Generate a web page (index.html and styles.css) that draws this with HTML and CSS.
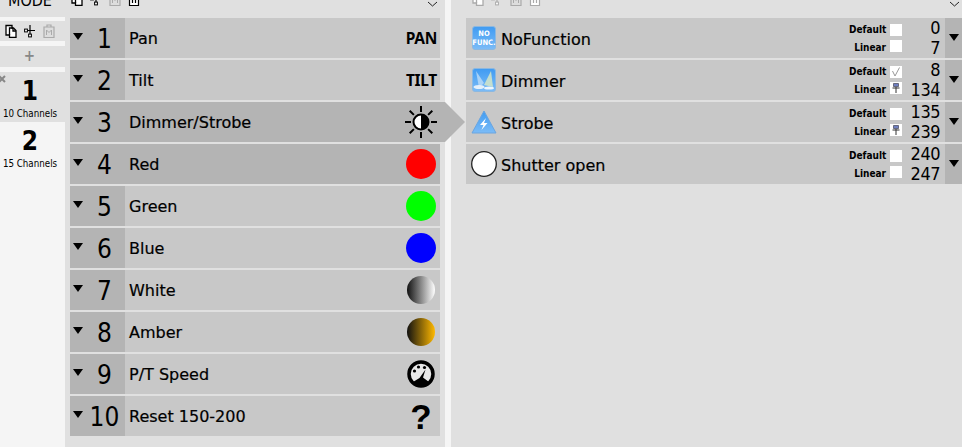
FILE: index.html
```html
<!DOCTYPE html>
<html>

<head>
  <meta charset="utf-8" />
  <title>Fixture channels</title>
  <link rel="stylesheet" href="styles.css">
</head>

<body>

<svg class="defs" width="0" height="0">
  <symbol id="i-copy" viewBox="0 0 12 14">
    <path d="M1 1.500h6v2.500h1.500L11 6.500v7H4.500v-2.500H1z" fill="#fff" stroke="currentColor" stroke-width="1.300"/>
    <path d="M4.500 11V4h3.500M8 4v3h3" fill="none" stroke="currentColor" stroke-width="1.300"/>
  </symbol>
  <symbol id="i-tree" viewBox="0 0 12 14">
    <path d="M6 1v12M1 6.500h10" stroke="currentColor" stroke-width="1.200" fill="none"/>
    <rect x="0.600" y="5.100" width="2.800" height="2.800" fill="#fff" stroke="currentColor"/>
    <rect x="4.600" y="10.100" width="2.800" height="2.800" fill="#fff" stroke="currentColor"/>
  </symbol>
  <symbol id="i-paste" viewBox="0 0 12 14">
    <path d="M1 3h10v10.500H1z" fill="#ddd" stroke="currentColor" stroke-width="1.200"/>
    <path d="M4 3V1h4v2" fill="none" stroke="currentColor" stroke-width="1.200"/>
    <path d="M3.500 11V6l2.500 2.500L8.500 6v5" fill="none" stroke="currentColor"/>
  </symbol>
  <symbol id="i-bin" viewBox="0 0 12 14">
    <path d="M1.500 2.500h9v11h-9z" fill="#fff" stroke="currentColor" stroke-width="1.200"/>
    <path d="M4.500 5v6M7.500 5v6M0 2.500h12M4 2.500V0.500h4v2" fill="none" stroke="currentColor" stroke-width="1.200"/>
  </symbol>
  <symbol id="i-pin" viewBox="0 0 12 12">
    <path d="M3.500 1.500h5v3h-5z" fill="#6f7fc0" stroke="#445" stroke-width="0.700"/>
    <path d="M2.500 6h7M6 5v6" stroke="#333" stroke-width="1" fill="none"/>
  </symbol>
  <linearGradient id="blue" x1="0" y1="0" x2="0" y2="1">
    <stop offset="0" stop-color="#3f9bf2"/>
    <stop offset="1" stop-color="#7cbcf7"/>
  </linearGradient>
</svg>

<div class="sidebar">
  <div class="side-head">MODE</div>
  <div class="side-tools">
    <svg class="tool"><use href="#i-copy"/></svg>
    <svg class="tool"><use href="#i-tree"/></svg>
    <svg class="tool off"><use href="#i-paste"/></svg>
  </div>
  <div class="side-add">+</div>
  <div class="mode current">
    <svg class="mode-close" width="6" height="8" viewBox="0 0 6 8"><path d="M-1 1l6 6M5 1l-6 6" stroke="#888" stroke-width="2"/></svg>
    <div class="mode-num">1</div>
    <div class="mode-label">10 Channels</div>
  </div>
  <div class="mode">
    <div class="mode-num">2</div>
    <div class="mode-label">15 Channels</div>
  </div>
</div>

<div class="channels">
  <div class="toolbar">
    <svg class="tool"><use href="#i-copy"/></svg>
    <svg class="tool"><use href="#i-tree"/></svg>
    <svg class="tool off"><use href="#i-paste"/></svg>
    <svg class="tool"><use href="#i-bin"/></svg>
    <svg class="chevron" width="11" height="6" viewBox="0 0 11 6"><path d="M1 1l4.500 4L10 1" fill="none" stroke="#222"/></svg>
  </div>

  <div class="row">
    <span class="tri"></span><span class="num">1</span><span class="name">Pan</span>
    <span class="tag">PAN</span>
  </div>
  <div class="row">
    <span class="tri"></span><span class="num">2</span><span class="name">Tilt</span>
    <span class="tag">TILT</span>
  </div>
  <div class="row selected">
    <span class="tri"></span><span class="num">3</span><span class="name">Dimmer/Strobe</span>
    <span class="glyph">
      <svg width="34" height="34" viewBox="0 0 34 34">
        <circle cx="17" cy="17" r="7.500" fill="#fff" stroke="#000" stroke-width="2"/>
        <path d="M17 9.500a7.500 7.500 0 0 1 0 15z" fill="#000"/>
        <path d="M17 1v6M17 27v6M1 17h6M27 17h6M5.700 5.700l4.200 4.200M24.100 24.100l4.200 4.200M5.700 28.300l4.200-4.200M24.100 9.900l4.200-4.200" stroke="#000" stroke-width="2" fill="none"/>
      </svg>
    </span>
  </div>
  <div class="row marked">
    <span class="tri"></span><span class="num">4</span><span class="name">Red</span>
    <span class="glyph"><span class="dot red"></span></span>
  </div>
  <div class="row">
    <span class="tri"></span><span class="num">5</span><span class="name">Green</span>
    <span class="glyph"><span class="dot green"></span></span>
  </div>
  <div class="row">
    <span class="tri"></span><span class="num">6</span><span class="name">Blue</span>
    <span class="glyph"><span class="dot blue"></span></span>
  </div>
  <div class="row">
    <span class="tri"></span><span class="num">7</span><span class="name">White</span>
    <span class="glyph"><span class="dot white"></span></span>
  </div>
  <div class="row">
    <span class="tri"></span><span class="num">8</span><span class="name">Amber</span>
    <span class="glyph"><span class="dot amber"></span></span>
  </div>
  <div class="row">
    <span class="tri"></span><span class="num">9</span><span class="name">P/T Speed</span>
    <span class="glyph">
      <svg width="30" height="30" viewBox="0 0 30 30">
        <circle cx="15" cy="15" r="12" fill="#e8e8e8" stroke="#000" stroke-width="3.500"/>
        <circle cx="8.500" cy="12" r="1.600"/>
        <circle cx="12.500" cy="8" r="1.600"/>
        <circle cx="18.500" cy="8.500" r="1.600"/>
        <path d="M19.500 10.500L17 18.500L23 23A11 11 0 0 1 7 23L13.500 19z"/>
      </svg>
    </span>
  </div>
  <div class="row">
    <span class="tri"></span><span class="num">10</span><span class="name">Reset 150-200</span>
    <span class="glyph"><span class="ask">?</span></span>
  </div>
</div>

<div class="functions">
  <div class="toolbar light">
    <svg class="tool"><use href="#i-copy"/></svg>
    <svg class="tool"><use href="#i-tree"/></svg>
    <svg class="tool"><use href="#i-paste"/></svg>
    <svg class="tool"><use href="#i-bin"/></svg>
    <svg class="chevron" width="11" height="6" viewBox="0 0 11 6"><path d="M1 1l4.500 4L10 1" fill="none" stroke="#222"/></svg>
  </div>

  <div class="frow">
    <svg class="ficon" width="24" height="24" viewBox="0 0 24 24">
      <rect x="0.500" y="0.500" width="23" height="23" rx="2.500" fill="url(#blue)" stroke="#8cb8e0"/>
      <text x="12" y="10" class="ficon-text">NO</text>
      <text x="12" y="19" class="ficon-text">FUNC.</text>
    </svg>
    <span class="fname">NoFunction</span>
    <div class="limits">
      <span class="lbl">Default</span><span class="box"></span><span class="val">0</span>
      <span class="lbl">Linear</span><span class="box"></span><span class="val">7</span>
    </div>
    <span class="handle"><span class="tri"></span></span>
  </div>

  <div class="frow">
    <svg class="ficon" width="24" height="24" viewBox="0 0 24 24">
      <rect x="0.500" y="0.500" width="23" height="23" rx="2.500" fill="url(#blue)" stroke="#8cb8e0"/>
      <path d="M4 3L12 15L7 20z" fill="#bcdcf8" opacity=".8"/>
      <path d="M19 3L12 17L21 19z" fill="#d5e6c8" opacity=".85"/>
      <ellipse cx="7" cy="19" rx="5.500" ry="2" fill="#e4f0fb"/>
      <ellipse cx="17" cy="20" rx="5" ry="1.600" fill="#eef6fd"/>
    </svg>
    <span class="fname">Dimmer</span>
    <div class="limits">
      <span class="lbl">Default</span>
      <span class="box"><svg width="12" height="12" viewBox="0 0 12 12"><path d="M2.500 5l2.500 5L9.500 1.500" fill="none" stroke="#999"/></svg></span>
      <span class="val">8</span>
      <span class="lbl">Linear</span>
      <span class="box"><svg width="12" height="12"><use href="#i-pin"/></svg></span>
      <span class="val">134</span>
    </div>
    <span class="handle"><span class="tri"></span></span>
  </div>

  <div class="frow">
    <svg class="ficon big" width="26" height="24" viewBox="0 0 26 24">
      <path d="M13 1L25 23H1z" fill="url(#blue)" stroke="#6aa5e0" stroke-linejoin="round"/>
      <path d="M15 8l-6 7h3.500l-2 5 6-7h-3.500z" fill="#fff"/>
    </svg>
    <span class="fname">Strobe</span>
    <div class="limits">
      <span class="lbl">Default</span><span class="box"></span><span class="val">135</span>
      <span class="lbl">Linear</span>
      <span class="box"><svg width="12" height="12"><use href="#i-pin"/></svg></span>
      <span class="val">239</span>
    </div>
    <span class="handle"><span class="tri"></span></span>
  </div>

  <div class="frow">
    <svg class="ficon big" width="26" height="26" viewBox="0 0 26 26">
      <circle cx="13" cy="13" r="12.300" fill="#fff" stroke="#222" stroke-width="1.300"/>
    </svg>
    <span class="fname">Shutter open</span>
    <div class="limits">
      <span class="lbl">Default</span><span class="box"></span><span class="val">240</span>
      <span class="lbl">Linear</span><span class="box"></span><span class="val">247</span>
    </div>
    <span class="handle"><span class="tri"></span></span>
  </div>
</div>

</body>
</html>
```

FILE: styles.css
```css
html, body {
  height: 100%;
  margin: 0px;
  padding: 0px;
  overflow: hidden;
}

body {
  display: flex;
  background-color: #f5f5f5;
  color: #000;
  font-family: "DejaVu Sans", sans-serif;
}

.defs {
  position: absolute;
}

/* left column with the modes */
.sidebar {
  width: 65px;
  flex: none;
  display: flex;
  flex-direction: column;
  font-family: "DejaVu Sans Condensed", "DejaVu Sans", sans-serif;
}

.side-head {
  height: 17px;
  overflow: hidden;
  background-color: #e0e0e0;
  margin-bottom: 4px;
  padding-right: 5px;
  font-size: 16px;
  line-height: 2px;
  text-align: center;
}

.side-tools {
  height: 20px;
  background-color: #e0e0e0;
  margin-bottom: 5px;
  padding-left: 5px;
  display: flex;
  align-items: center;
  gap: 7px;
}

.side-add {
  height: 21px;
  background-color: #e0e0e0;
  margin-bottom: 5px;
  padding-right: 6px;
  color: #888;
  font-size: 15px;
  font-weight: bold;
  line-height: 21px;
  text-align: center;
}

.mode {
  position: relative;
  height: 50px;
  padding-right: 5px;
  text-align: center;
}

.mode.current {
  background-color: #e0e0e0;
}

.mode-close {
  position: absolute;
  left: 0px;
  top: 3px;
}

.mode-num {
  height: 34px;
  padding-top: 2px;
  font-size: 26px;
  font-weight: bold;
  line-height: 34px;
}

.mode-label {
  font-size: 9.700px;
  line-height: 11px;
  white-space: nowrap;
}

/* channel list */
.channels {
  width: 380px;
  flex: none;
  box-sizing: border-box;
  padding: 0px 5px;
  background-color: #e0e0e0;
  display: flex;
  flex-direction: column;
  gap: 2px;
}

.functions {
  flex: 1;
  margin-left: 6px;
  padding-left: 15px;
  background-color: #e0e0e0;
  display: flex;
  flex-direction: column;
  gap: 2px;
}

.toolbar {
  height: 6px;
  flex: none;
  overflow: hidden;
  display: flex;
  align-items: flex-end;
  gap: 7px;
  padding: 0px 0px 10px 1px;
}

.toolbar.light {
  padding-left: 6px;
  color: #aaa;
}

.tool {
  width: 12px;
  height: 14px;
  flex: none;
}

.tool.off {
  color: #aaa;
}

.chevron {
  margin-left: auto;
  margin-right: 2px;
  margin-bottom: -1px;
  flex: none;
}

.row {
  position: relative;
  height: 40px;
  flex: none;
  display: flex;
  align-items: center;
  background-color: #c8c8c8;
}

.row::before {
  content: "";
  position: absolute;
  left: 0px;
  top: 0px;
  bottom: 0px;
  width: 55px;
  background-color: #b4b4b4;
}

.row.selected,
.row.marked {
  background-color: #b4b4b4;
}

.row.selected::after {
  content: "";
  position: absolute;
  left: 100%;
  top: 0px;
  width: 25px;
  height: 40px;
  background-color: #b4b4b4;
  clip-path: polygon(0 0, 5px 0, 100% 50%, 5px 100%, 0 100%);
}

.tri {
  width: 0px;
  height: 0px;
  border-style: solid;
  border-width: 7px 5.500px 0px 5.500px;
  border-color: #000 transparent transparent transparent;
  flex: none;
}

.row .tri {
  position: relative;
  top: -2px;
  margin-left: 3px;
}

.num {
  position: relative;
  top: 1px;
  width: 43px;
  flex: none;
  font-family: "DejaVu Sans Condensed", "DejaVu Sans", sans-serif;
  font-size: 26px;
  line-height: 40px;
  text-align: center;
}

.name {
  position: relative;
  margin-left: 3px;
  font-size: 16px;
  -webkit-text-stroke: 0.200px #000;
}

.tag {
  margin-left: auto;
  margin-right: 3px;
  font-family: "Noto Sans", sans-serif;
  font-size: 15.500px;
  font-weight: 700;
  letter-spacing: -0.300px;
}

.glyph {
  margin-left: auto;
  margin-right: 2px;
  width: 34px;
  height: 34px;
  display: flex;
  align-items: center;
  justify-content: center;
}

.dot {
  width: 30px;
  height: 30px;
  border-radius: 50%;
}

.red { background-color: #ff0000; }
.green { background-color: #00ff00; }
.blue { background-color: #0000ff; }

.white {
  width: 28px;
  height: 28px;
  background: linear-gradient(to right, #111, #fff);
}

.amber {
  width: 28px;
  height: 28px;
  background: linear-gradient(to right, #111, #ffb900);
}

.ask {
  padding-top: 2px;
  font-family: "Liberation Sans", sans-serif;
  font-size: 35px;
  font-weight: bold;
  line-height: 34px;
}

/* functions of the selected channel */
.frow {
  height: 40px;
  flex: none;
  display: flex;
  align-items: center;
  background-color: #c8c8c8;
  padding-left: 6px;
}

.ficon {
  flex: none;
}

.ficon.big {
  margin: 0px -1px;
}

.ficon-text {
  fill: #fff;
  font-size: 7.500px;
  font-weight: bold;
  text-anchor: middle;
  font-family: "DejaVu Sans Condensed", "DejaVu Sans", sans-serif;
}

.fname {
  position: relative;
  top: 1px;
  margin-left: 5px;
  font-size: 16px;
  -webkit-text-stroke: 0.200px #000;
}

.limits {
  margin-left: auto;
  display: grid;
  grid-template-columns: 37px 12px 34px;
  grid-auto-rows: 18px;
  column-gap: 4px;
  align-items: center;
  font-family: "DejaVu Sans Condensed", "DejaVu Sans", sans-serif;
}

.lbl {
  font-size: 10px;
  font-weight: bold;
  text-align: right;
  white-space: nowrap;
}

.box {
  width: 12px;
  height: 12px;
  background-color: #fff;
  display: block;
  line-height: 0;
}

.box:nth-child(2) {
  margin-top: 2px;
}

.box:nth-child(5) {
  margin-bottom: 2px;
}

.val {
  font-size: 18px;
  line-height: 18px;
  letter-spacing: -0.500px;
  text-align: right;
}

.val:nth-child(3) {
  margin-top: -2px;
}

.val:nth-child(6) {
  margin-top: 2px;
}

.handle {
  width: 17px;
  height: 40px;
  margin-left: 5px;
  flex: none;
  background-color: #b4b4b4;
  display: flex;
  align-items: center;
  justify-content: center;
}

.handle .tri {
  position: relative;
  top: -1px;
}
```
